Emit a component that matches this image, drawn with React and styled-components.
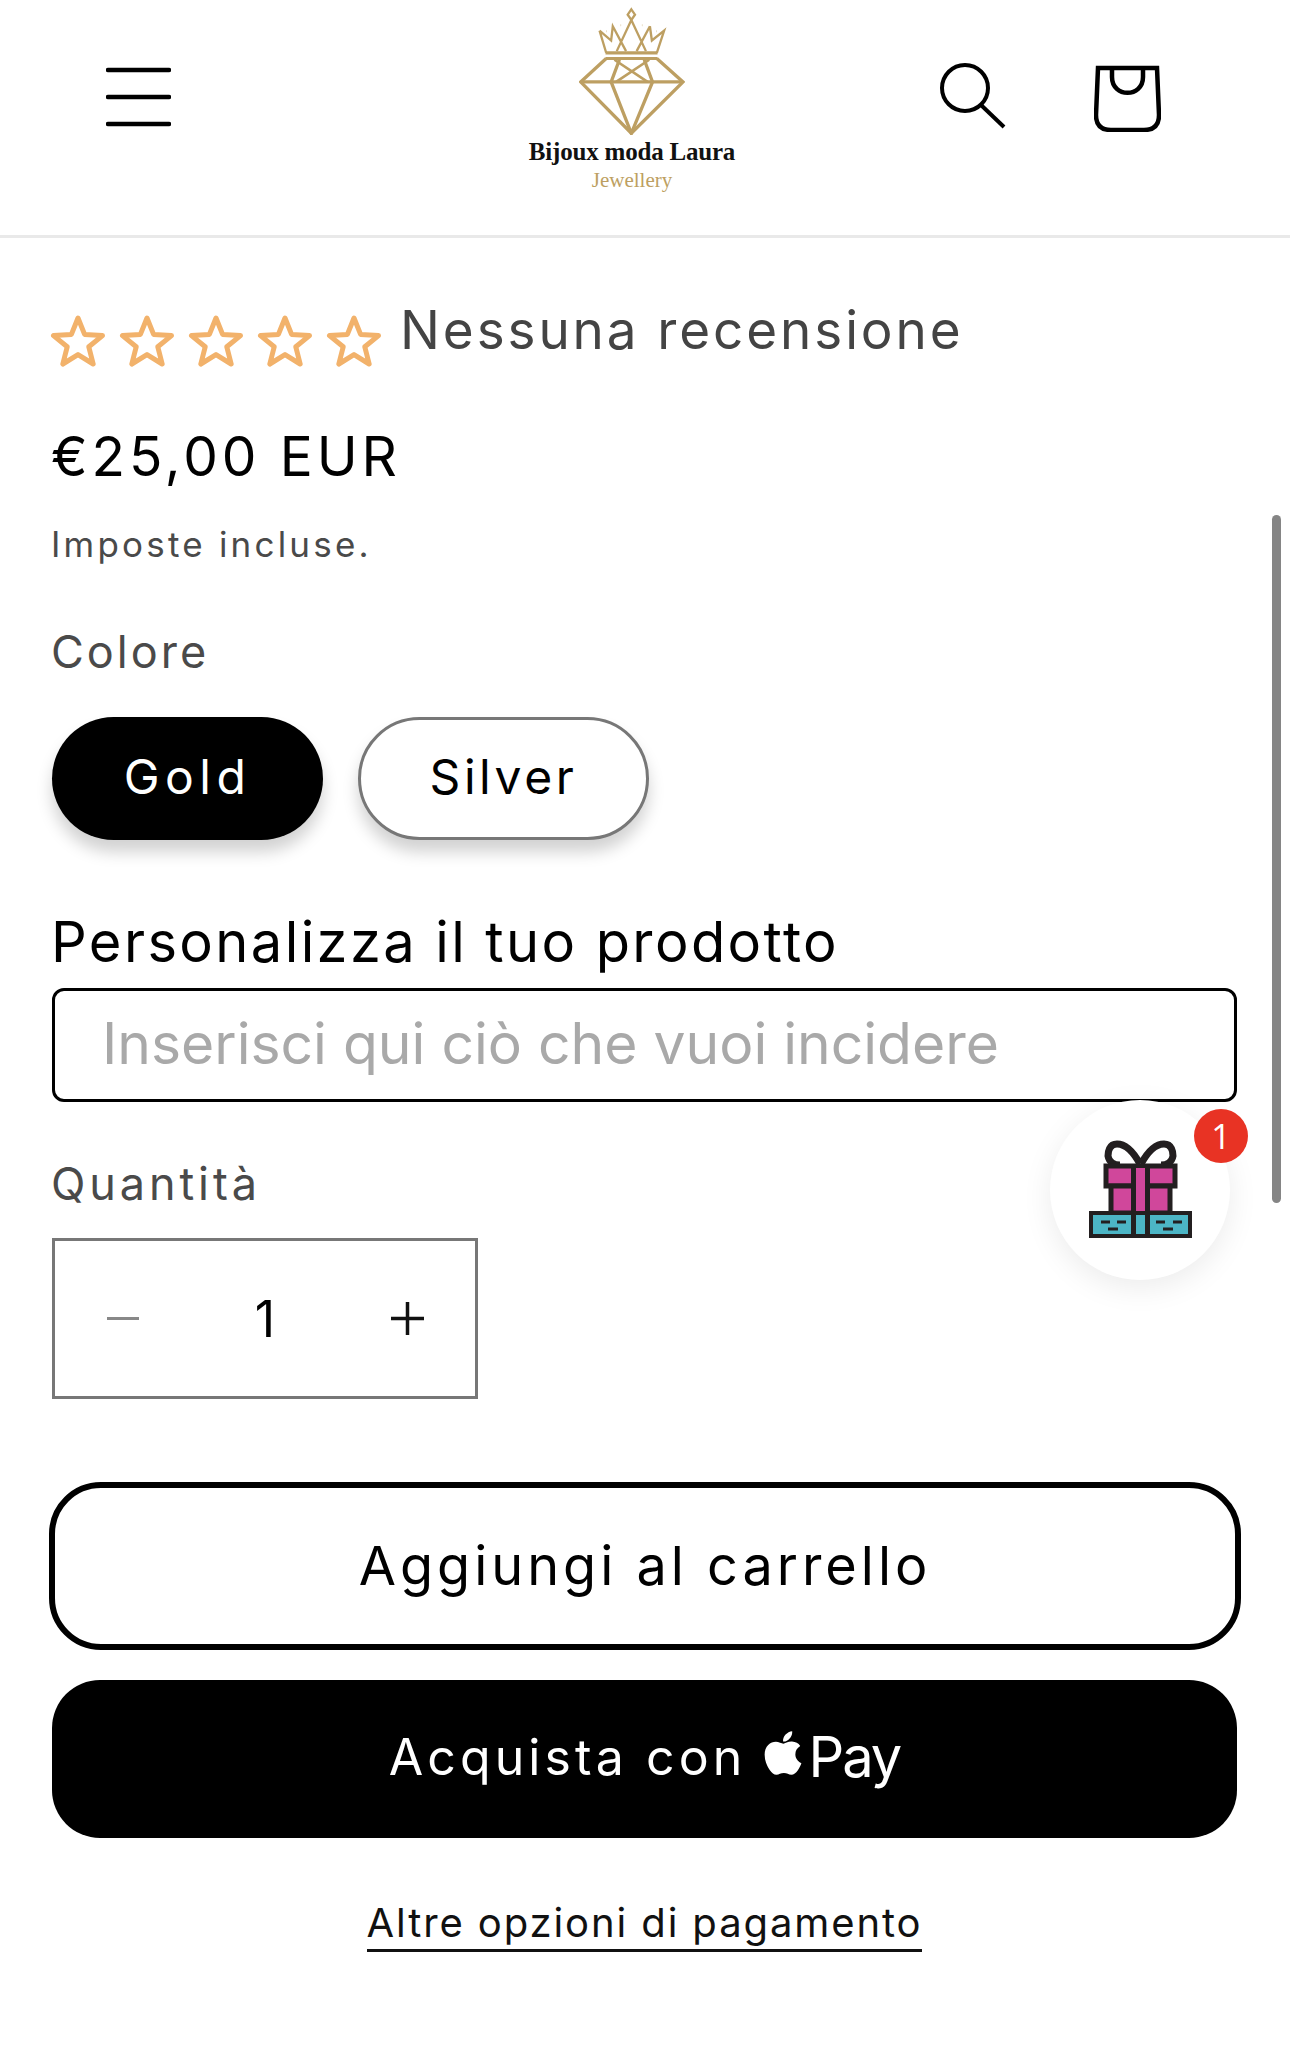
import React from "react";
import styled, { createGlobalStyle } from "styled-components";
import { FaApple } from "react-icons/fa";

const GlobalStyle = createGlobalStyle`
    html, body {
        margin: 0;
        padding: 0;
        background: #fff;
    }
    body {
        font-family: Inter, "Liberation Sans", sans-serif;
        color: #000;
        overflow: hidden;
    }
`;

const Page = styled.div`
    position: relative;
    width: 1290px;
    height: 2046px;
    overflow: hidden;
`;

const Header = styled.header`
    height: 235px;
    border-bottom: 3px solid #e9e9e9;
    padding: 0 129px 0 106px;
    display: flex;
    align-items: flex-start;
    justify-content: space-between;
`;

const IconButton = styled.button`
    border: 0;
    background: none;
    padding: 0;
    margin-top: ${(props) => props.$top}px;
    width: ${(props) => props.$size}px;
    height: ${(props) => props.$size}px;
    display: block;
    svg {
        display: block;
    }
`;

const Logo = styled.div`
    width: 240px;
    margin-left: 154px;
    padding-top: 7px;
    display: flex;
    flex-direction: column;
    align-items: center;
`;

const LogoName = styled.div`
    font-family: "Liberation Serif", serif;
    font-weight: 700;
    font-size: 25px;
    line-height: 28px;
    margin-top: 3px;
    letter-spacing: -0.2px;
    color: #111;
    white-space: nowrap;
`;

const LogoSub = styled.div`
    font-family: "Liberation Serif", serif;
    font-size: 21px;
    line-height: 26px;
    margin-top: 1px;
    color: #bd9f62;
`;

const HeaderRight = styled.div`
    display: flex;
    gap: 88px;
`;

const Main = styled.main`
    padding: 0 53px 0 52px;
`;

const Rating = styled.div`
    display: flex;
    align-items: flex-start;
    padding-top: 61px;
    height: 87px;
`;

const Stars = styled.div`
    display: flex;
    gap: 13px;
    margin: 16px 18px 0 -2px;
`;

const RatingText = styled.span`
    font-size: 53px;
    line-height: 62px;
    letter-spacing: 2.9px;
    color: #444;
`;

const Price = styled.div`
    font-size: 55px;
    line-height: 64px;
    letter-spacing: 3.9px;
    margin: 38px 0 0 -1px;
`;

const TaxNote = styled.div`
    font-size: 35px;
    line-height: 42px;
    letter-spacing: 3.2px;
    color: #4a4a4a;
    margin: 35px 0 0 -1px;
`;

const FieldLabel = styled.div`
    font-size: 45px;
    line-height: 50px;
    letter-spacing: ${(props) => props.$spacing}px;
    color: #4a4a4a;
    margin: ${(props) => props.$top}px 0 0 -1px;
`;

const Variants = styled.div`
    display: flex;
    gap: 35px;
    margin-top: 40px;
`;

const Pill = styled.div`
    box-sizing: border-box;
    width: ${(props) => props.$width}px;
    height: 123px;
    padding-bottom: 4px;
    border-radius: 62px;
    display: flex;
    align-items: center;
    justify-content: center;
    font-size: 48px;
    letter-spacing: ${(props) => props.$spacing}px;
    background: ${(props) => (props.$active ? "#000" : "#fff")};
    color: ${(props) => (props.$active ? "#fff" : "#000")};
    border: ${(props) => (props.$active ? "0" : "3px solid #777")};
    box-shadow: 0 12px 16px rgba(0, 0, 0, 0.18);
`;

const CustomTitle = styled.div`
    font-size: 56px;
    line-height: 64px;
    letter-spacing: 2.4px;
    margin: 70px 0 0 -1px;
`;

const EngraveInput = styled.input`
    display: block;
    box-sizing: border-box;
    width: 100%;
    height: 114px;
    margin-top: 14px;
    border: 3px solid #000;
    border-radius: 12px;
    padding: 0 40px 4px 47px;
    font-family: Inter, sans-serif;
    font-size: 57px;
    background: #fff;
    &::placeholder {
        color: #a9a9a9;
        opacity: 1;
    }
`;

const Stepper = styled.div`
    box-sizing: border-box;
    width: 426px;
    height: 161px;
    margin-top: 29px;
    border: 3px solid #777;
    display: grid;
    grid-template-columns: 136px 148px 136px;
    align-items: center;
    justify-items: center;
    font-size: 50px;
`;

const CartButton = styled.button`
    display: block;
    box-sizing: border-box;
    width: calc(100% + 7px);
    height: 168px;
    margin: 83px 0 0 -3px;
    padding-bottom: 3px;
    border: 6px solid #000;
    border-radius: 52px;
    background: #fff;
    color: #000;
    font-family: inherit;
    font-size: 54px;
    letter-spacing: 4px;
`;

const PayButton = styled.button`
    width: 100%;
    height: 158px;
    margin-top: 30px;
    padding-bottom: 6px;
    border: 0;
    border-radius: 48px;
    background: #000;
    color: #fff;
    font-family: inherit;
    font-size: 50px;
    letter-spacing: 4.1px;
    display: flex;
    align-items: center;
    justify-content: center;
`;

const PayMark = styled.span`
    display: inline-flex;
    align-items: center;
    margin-left: 12px;
    font-size: 56px;
    letter-spacing: -2px;
    svg {
        margin-right: 0;
        margin-top: -8px;
    }
`;

const MoreLink = styled.a`
    display: table;
    margin: 60px auto 0;
    font-size: 40px;
    line-height: 50px;
    letter-spacing: 1.9px;
    color: #111;
    border-bottom: 3px solid #111;
    padding-bottom: 1px;
`;

const Scrollbar = styled.div`
    position: absolute;
    top: 515px;
    right: 9px;
    width: 9px;
    height: 688px;
    border-radius: 5px;
    background: #858585;
`;

const GiftBubble = styled.div`
    position: absolute;
    left: 1050px;
    top: 1100px;
    width: 180px;
    height: 180px;
    border-radius: 50%;
    background: #fff;
    box-shadow: 0 8px 30px rgba(0, 0, 0, 0.08);
    display: flex;
    align-items: center;
    justify-content: center;
    svg {
        position: relative;
        top: -1px;
    }
`;

const GiftBadge = styled.span`
    position: absolute;
    left: 144px;
    top: 9px;
    width: 54px;
    height: 54px;
    border-radius: 50%;
    background: #e83324;
    color: #fff;
    font-family: "Open Sans", sans-serif;
    font-size: 34px;
    display: flex;
    align-items: center;
    justify-content: center;
`;

function StarIcon() {
    return (
        <svg width="56" height="52" viewBox="0 0 56 52">
            <path
                d="M28 3 L34.6 19.4 L52.5 20.6 L38.8 31.8 L43.2 49 L28 39.6 L12.8 49 L17.2 31.8 L3.5 20.6 L21.4 19.4 Z"
                fill="none"
                stroke="#f2b26b"
                strokeWidth="5"
                strokeLinejoin="round"
            />
        </svg>
    );
}

// viewBox follows the 3x crop of the logo
function DiamondLogo() {
    return (
        <svg width="106" height="128" viewBox="298 18 320 384" fill="none" stroke="#bd9f62" strokeWidth="10">
            <path d="M456 24 L467 40 L456 56 L445 40 Z" strokeWidth="7" />
            <path d="M360 88 L380 155 M360 88 L395 118 L400 75 L440 150 M400 75 M456 56 L412 150 M456 56 L500 150 M512 75 L472 150 M512 75 L518 118 L555 88 L533 155" strokeWidth="7" />
            <path d="M378 155 H535" strokeWidth="10" />
            <path d="M378 172 H535" strokeWidth="9" />
            <path d="M380 172 L303 243 L456 398 L612 243 L533 172" />
            <path d="M303 243 H612" />
            <path d="M420 176 L395 243 L456 398 L520 243 L495 176" />
            <path d="M405 176 L505 243 M510 176 L410 243" strokeWidth="8" />
            <path d="M424 72 h1 M488 72 h1 M380 90 h1 M532 90 h1" strokeWidth="6" />
        </svg>
    );
}

function GiftIcon() {
    return (
        <svg width="103" height="98" viewBox="0 0 103 98">
            <path
                d="M51 24 C45 13 37 4 28 4 C20 4 19 12 19 16 C20 22 25 25 31 25 M52 24 C58 13 66 4 75 4 C83 4 84 12 84 16 C83 22 78 25 72 25"
                fill="none"
                stroke="#231f20"
                strokeWidth="7"
            />
            <rect x="17" y="26" width="69" height="20" fill="#d0479b" stroke="#231f20" strokeWidth="5" />
            <rect x="22" y="46" width="59" height="27" fill="#d0479b" stroke="#231f20" strokeWidth="5" />
            <rect x="2" y="73" width="99" height="23" fill="#4cb5c5" stroke="#231f20" strokeWidth="4" />
            <rect x="42" y="26" width="19" height="72" fill="#231f20" />
            <rect x="47" y="28" width="9" height="43" fill="#d0479b" />
            <rect x="47" y="75" width="9" height="19" fill="#4cb5c5" />
            <path d="M12 82 H21 M28 82 H37 M19 89 H29 M67 82 H76 M84 82 H93 M74 89 H84" stroke="#231f20" strokeWidth="3" />
        </svg>
    );
}

function App() {
    return (
        <Page>
            <GlobalStyle />
            <Header>
                <IconButton $size={65} $top={64}>
                    <svg width="65" height="65" viewBox="0 0 65 65" stroke="#000" strokeWidth="4.5" strokeLinecap="round">
                        <path d="M2 6 H63 M2 33 H63 M2 60 H63" />
                    </svg>
                </IconButton>
                <Logo>
                    <DiamondLogo />
                    <LogoName>Bijoux moda Laura</LogoName>
                    <LogoSub>Jewellery</LogoSub>
                </Logo>
                <HeaderRight>
                    <IconButton $size={67} $top={62}>
                        <svg width="67" height="67" viewBox="0 0 67 67" fill="none" stroke="#000" strokeWidth="4">
                            <circle cx="26" cy="26" r="23" />
                            <path d="M42 43 L65 65" />
                        </svg>
                    </IconButton>
                    <IconButton $size={67} $top={65}>
                        <svg width="67" height="67" viewBox="0 0 67 67" fill="none" stroke="#000" strokeWidth="4.5">
                            <path d="M4 3 H63 L65 50 C65 60 60 65 50 65 H17 C7 65 2 60 2 50 Z" />
                            <path d="M18 4 V12 C18 33 49 33 49 12 V4" />
                        </svg>
                    </IconButton>
                </HeaderRight>
            </Header>
            <Main>
                <Rating>
                    <Stars>
                        <StarIcon />
                        <StarIcon />
                        <StarIcon />
                        <StarIcon />
                        <StarIcon />
                    </Stars>
                    <RatingText>Nessuna recensione</RatingText>
                </Rating>
                <Price>€25,00 EUR</Price>
                <TaxNote>Imposte incluse.</TaxNote>
                <FieldLabel $top={62} $spacing={3}>Colore</FieldLabel>
                <Variants>
                    <Pill $active $width={271} $spacing={5.5}>Gold</Pill>
                    <Pill $width={291} $spacing={3.6}>Silver</Pill>
                </Variants>
                <CustomTitle>Personalizza il tuo prodotto</CustomTitle>
                <EngraveInput placeholder="Inserisci qui ciò che vuoi incidere" />
                <FieldLabel $top={57} $spacing={3.9}>Quantità</FieldLabel>
                <Stepper>
                    <svg width="32" height="4" viewBox="0 0 32 4"><rect width="32" height="3" fill="#888" /></svg>
                    <span>1</span>
                    <svg width="33" height="33" viewBox="0 0 33 33"><path d="M0 16.5 H33 M16.5 0 V33" stroke="#111" strokeWidth="3.5" /></svg>
                </Stepper>
                <CartButton>Aggiungi al carrello</CartButton>
                <PayButton>
                    Acquista con
                    <PayMark>
                        <FaApple size={50} />
                        Pay
                    </PayMark>
                </PayButton>
                <MoreLink>Altre opzioni di pagamento</MoreLink>
            </Main>
            <Scrollbar />
            <GiftBubble>
                <GiftIcon />
                <GiftBadge>1</GiftBadge>
            </GiftBubble>
        </Page>
    );
}

export default App;
